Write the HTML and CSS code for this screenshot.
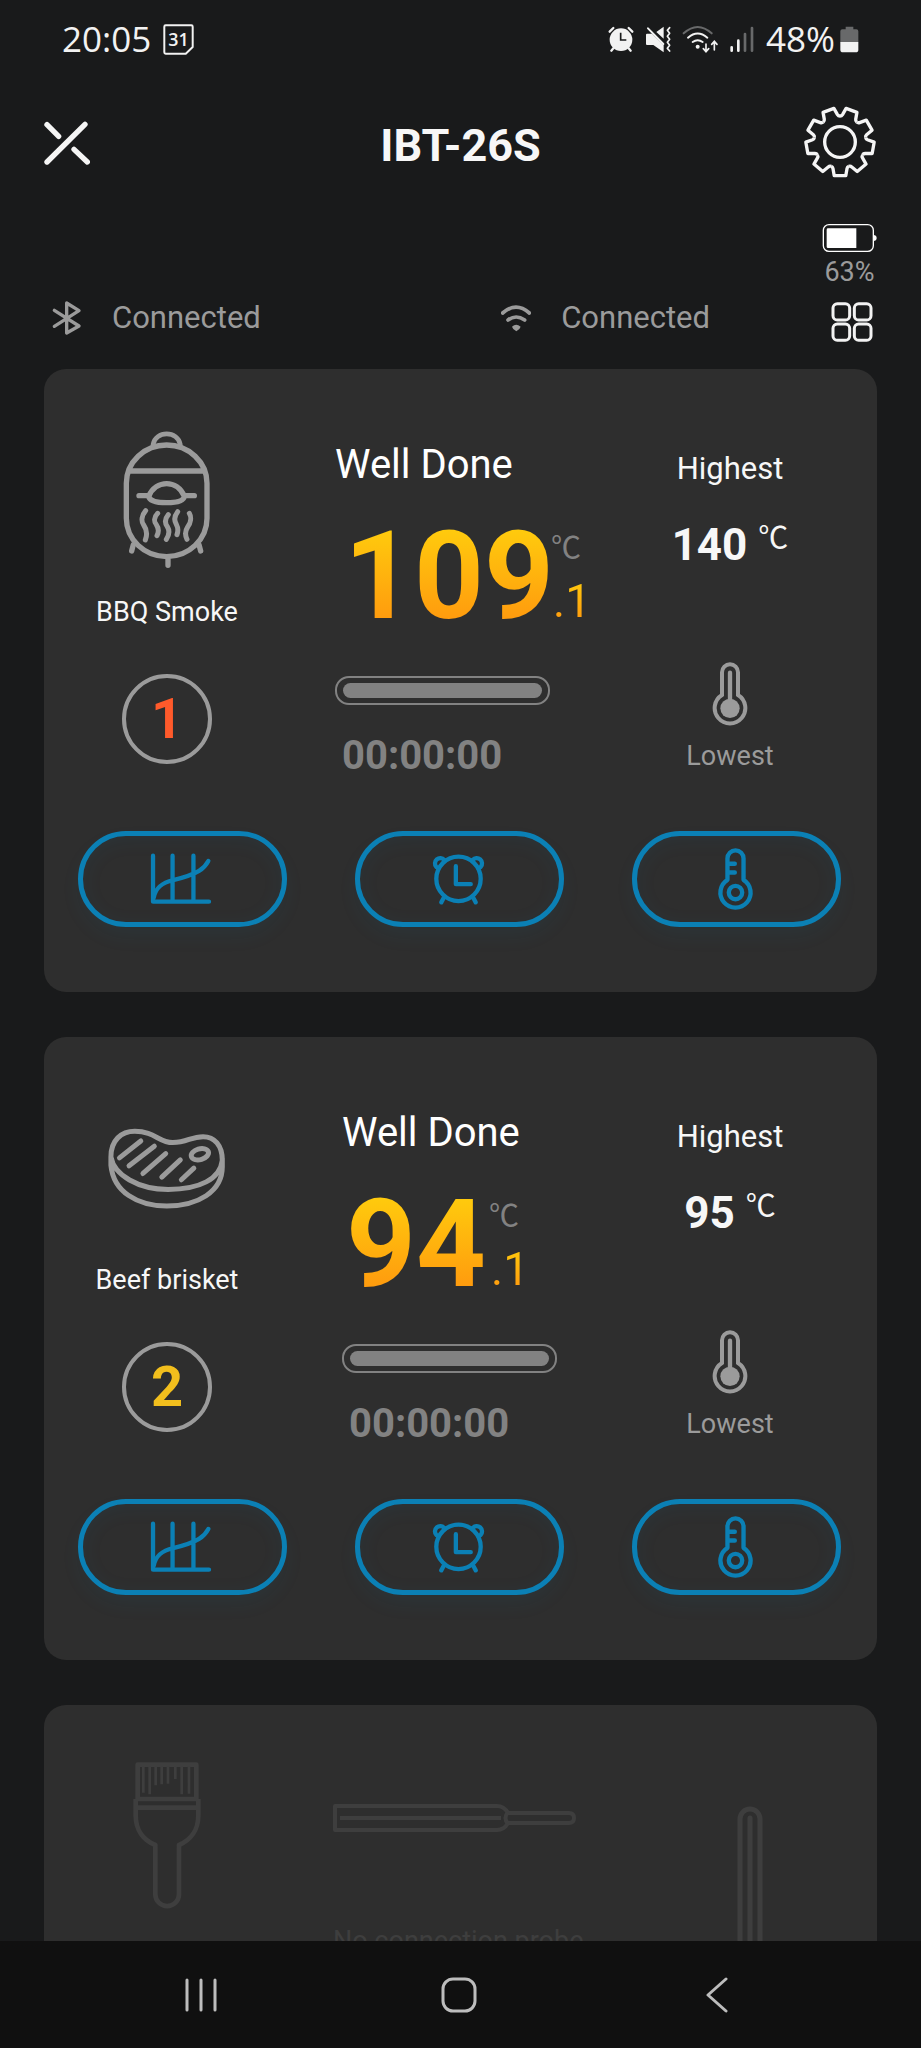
FILE: index.html
```html
<!DOCTYPE html>
<html lang="en">
<head>
<meta charset="utf-8">
<meta name="viewport" content="width=device-width, initial-scale=1">
<title>IBT-26S</title>
<link rel="stylesheet" href="styles.css">
</head>
<body>
<svg class="sprite" aria-hidden="true">
  <symbol id="i-chart" viewBox="328 157 200 160">
    <path d="M339 165V304H508M398 165V304M461 165V304M341 292C347 262 365 247 400 239C440 229 460 222 478 211Q496 200 506 181"/>
  </symbol>
  <symbol id="i-alarm" viewBox="1158 157 200 160">
    <circle cx="1255" cy="235" r="67"/>
    <path d="M1247 197V251H1292M1210 293L1203 306M1300 293L1307 306M1188 199A14 14 0 1 1 1212 178M1322 199A14 14 0 1 0 1298 178"/>
  </symbol>
  <symbol id="i-probe" viewBox="731 137 200 200">
    <path d="M804 238V174A24 24 0 0 1 852 174V238A45 45 0 1 1 804 238ZM806 190H826M806 216H826"/>
    <circle cx="828" cy="276" r="20"/>
  </symbol>
  <symbol id="i-lowest" viewBox="277 724 108 192">
    <path fill="none" stroke="currentColor" stroke-width="12" d="M307 823V755A24 24 0 0 1 355 755V823A46 46 0 1 1 307 823Z"/>
    <circle cx="331" cy="863" r="29" fill="currentColor"/>
    <path stroke="currentColor" stroke-width="13" stroke-linecap="round" d="M331 756V840"/>
  </symbol>
</svg>

<div class="app">
  <div class="status">
    <div class="status-left">
      <span>20:05</span>
      <svg width="33" height="33" viewBox="488 70 100 98" aria-hidden="true">
        <path fill="none" stroke="#f2f2f2" stroke-width="6" stroke-linejoin="round" d="M499 76H577Q581 76 581 80V142L560 162H499Q495 162 495 158V80Q495 76 499 76Z"/>
        <text class="cal-day" x="538" y="138" text-anchor="middle">31</text>
      </svg>
    </div>
    <div class="status-right">
      <svg width="26" height="28" viewBox="443 76 78 84" aria-hidden="true">
        <circle cx="482" cy="120" r="34" fill="#f2f2f2"/>
        <path fill="none" stroke="#f2f2f2" stroke-width="7" stroke-linecap="round" d="M448 96L459 85M516 96L505 85M459 146L453 153M505 146L511 153"/>
        <path fill="none" stroke="#191a1b" stroke-width="5" d="M481 99V121H498"/>
      </svg>
      <svg width="26" height="28" viewBox="557 76 78 84" aria-hidden="true">
        <path fill="#f2f2f2" d="M591 97L613 81V117ZM563 102H578L613 137V158L582 136H563Q560 136 560 133V105Q560 102 563 102Z"/>
        <path fill="none" stroke="#f2f2f2" stroke-width="6" stroke-linecap="round" d="M566 86L612 133"/>
        <path fill="none" stroke="#f2f2f2" stroke-width="5" stroke-linecap="round" stroke-linejoin="round" d="M631 84L624 92L631 101L624 110L631 119L624 128L631 137L624 146L631 154"/>
      </svg>
      <svg width="36" height="28" viewBox="668 76 108 84" aria-hidden="true">
        <g fill="none" stroke-width="6" stroke-linecap="round">
          <path stroke="#68696a" d="M673 101Q715 63 757 101"/>
          <path stroke="#f2f2f2" d="M686 114Q715 89 744 114M700 127Q715 116 730 127"/>
          <path stroke="#f2f2f2" stroke-width="5" d="M740 133V155M732 147L740 156L748 147M765 151V127M757 134L765 125L773 134"/>
        </g>
        <circle cx="715" cy="141" r="6" fill="#f2f2f2"/>
      </svg>
      <svg width="26" height="28" viewBox="797 76 78 84" aria-hidden="true">
        <g fill="none" stroke-width="8" stroke-linecap="round">
          <path stroke="#f2f2f2" d="M805 143V153M825 123V153"/>
          <path stroke="#68696a" d="M845 103V153M866 85V153"/>
        </g>
      </svg>
      <span>48%</span>
      <svg class="status-battery" width="19" height="28" viewBox="1139 76 57 84" aria-hidden="true">
        <path fill="#68696a" d="M1156 81H1179V89H1188Q1194 89 1194 95V128H1140V95Q1140 89 1146 89H1156Z"/>
        <path fill="#f2f2f2" d="M1140 127H1194V150Q1194 158 1186 158H1148Q1140 158 1140 150Z"/>
      </svg>
    </div>
  </div>

  <header class="topbar">
    <button class="icon-btn" type="button" aria-label="Close">
      <svg width="46" height="46" viewBox="132 358 138 138"><path fill="none" stroke="#f5f5f5" stroke-width="16" stroke-linecap="round" d="M255 374L141 487M141 375L176 410M222 449L262 487"/></svg>
    </button>
    <h1 class="title">IBT-26S</h1>
    <button class="icon-btn icon-btn-end" type="button" aria-label="Settings">
      <svg width="74" height="74" viewBox="-111 -111 222 222">
        <g fill="none" stroke="#f5f5f5" stroke-width="10" stroke-linejoin="round">
          <path id="tooth" d="M-26.7 73.3Q-22 75 -21 80L-17.3 101H17.3L21 80Q22 75 26.7 73.3"/>
          <use href="#tooth" transform="rotate(40)"/><use href="#tooth" transform="rotate(80)"/><use href="#tooth" transform="rotate(120)"/><use href="#tooth" transform="rotate(160)"/>
          <use href="#tooth" transform="rotate(200)"/><use href="#tooth" transform="rotate(240)"/><use href="#tooth" transform="rotate(280)"/><use href="#tooth" transform="rotate(320)"/>
          <circle r="46"/>
        </g>
      </svg>
    </button>
  </header>

  <section class="links" aria-label="Connections">
    <div class="link">
      <svg width="30" height="36" viewBox="157 292 90 108" aria-hidden="true"><path fill="none" stroke="#9b9b9b" stroke-width="10" stroke-linecap="round" stroke-linejoin="round" d="M164 323L238 370L201 391V301L238 324L164 371"/></svg>
      <span>Connected</span>
    </div>
    <div class="link">
      <svg width="30" height="36" viewBox="127 292 90 108" aria-hidden="true">
        <path fill="none" stroke="#9b9b9b" stroke-width="11" stroke-linecap="round" d="M132 331Q172 296 212 331M148 352Q172 334 198 352"/>
        <path fill="#9b9b9b" d="M160 372Q172 360 186 372Q184 380 173 386Q162 380 160 372Z"/>
      </svg>
      <span>Connected</span>
    </div>
    <div class="device">
      <svg width="55" height="28" viewBox="1084 72 165 84" aria-hidden="true">
        <rect x="1088" y="74" width="150" height="80" rx="17" fill="none" stroke="#fff" stroke-width="4"/>
        <path fill="#fff" d="M1102 85H1187V144H1102Q1098 144 1098 140V89Q1098 85 1102 85ZM1238 105Q1248 105 1248 114Q1248 123 1238 123Z"/>
      </svg>
      <span class="device-level">63%</span>
      <button class="grid-btn" type="button" aria-label="Grid view">
        <svg width="42" height="42" viewBox="1112 306 126 126"><g fill="none" stroke="#f2f2f2" stroke-width="9"><rect x="1118" y="314" width="50" height="49" rx="13"/><rect x="1182" y="314" width="50" height="49" rx="13"/><rect x="1118" y="375" width="50" height="49" rx="13"/><rect x="1182" y="375" width="50" height="49" rx="13"/></g></svg>
      </button>
    </div>
  </section>

  <main class="cards">
    <article class="card">
      <div class="info">
        <div class="food">
          <div class="food-icon">
            <svg width="90" height="140" viewBox="250 90 270 420" aria-hidden="true">
              <g fill="none" stroke="#9b9b9b" stroke-width="16" stroke-linecap="round">
                <path d="M263 250A121 115 0 0 1 505 250V355A121 115 0 0 1 263 355ZM270 213H498"/>
                <path d="M343 134C350 91 418 91 425 134" stroke-width="14"/>
                <path d="M330 289C352 238 416 238 437 289Q434 308 384 308Q334 308 330 289ZM301 287H326M441 287H467M284 434L279 453M481 434L486 453M388 478V496"/>
                <path stroke-width="15" d="M321 332C310 345 306 362 315 375C325 389 327 402 320 420M357 340C345 352 346 366 353 374C361 385 361 395 355 407M389 344C378 357 378 369 386 380C394 393 391 406 383 418M417 335C407 348 405 360 413 373C419 384 419 393 415 404M452 340C459 352 456 369 447 381C439 393 438 404 445 418"/>
              </g>
            </svg>
          </div>
          <h2 class="food-name">BBQ Smoke</h2>
          <span class="ring ring-red">1</span>
        </div>
        <div class="main-reading">
          <p class="doneness">Well Done</p>
          <p class="temp"><span class="temp-int">109</span><span class="temp-side"><span class="unit">℃</span><span class="temp-dec">.1</span></span></p>
          <div class="bar" role="progressbar" aria-label="Cooking progress"><div class="bar-fill"></div></div>
          <time class="timer">00:00:00</time>
        </div>
        <div class="limits">
          <p class="limit-name">Highest</p>
          <p class="limit-value">140<span class="unit">℃</span></p>
          <svg class="lowest-icon" width="36" height="64" aria-hidden="true"><use href="#i-lowest"/></svg>
          <p class="limit-low">Lowest</p>
        </div>
      </div>
      <div class="actions">
        <button class="action" type="button" aria-label="Chart"><svg width="67" height="53"><use href="#i-chart"/></svg></button>
        <button class="action" type="button" aria-label="Timer"><svg width="67" height="53"><use href="#i-alarm"/></svg></button>
        <button class="action" type="button" aria-label="Temperature"><svg width="67" height="67"><use href="#i-probe"/></svg></button>
      </div>
    </article>

    <article class="card card-short">
      <div class="info">
        <div class="food">
          <div class="food-icon">
            <svg width="121" height="83" viewBox="190 105 340 250" preserveAspectRatio="none" aria-hidden="true">
              <g class="steady" fill="none" stroke="#9b9b9b" stroke-width="5" stroke-linecap="round">
                <path d="M201 195C201 145 230 118 268 118C325 118 335 152 375 152C415 152 425 134 460 134C492 134 514 160 514 205C508 262 450 293 362 293C278 293 210 250 201 195ZM201 195V220C208 300 275 343 358 343C445 343 514 300 514 225V200"/>
                <path d="M285 147L225 198M323 163L252 222M355 185L291 245M396 204L344 256M434 229L399 264"/>
                <ellipse cx="451" cy="187" rx="25" ry="16" transform="rotate(-18 451 187)"/>
              </g>
            </svg>
          </div>
          <h2 class="food-name">Beef brisket</h2>
          <span class="ring ring-yellow">2</span>
        </div>
        <div class="main-reading">
          <p class="doneness">Well Done</p>
          <p class="temp"><span class="temp-int">94</span><span class="temp-side"><span class="unit">℃</span><span class="temp-dec">.1</span></span></p>
          <div class="bar" role="progressbar" aria-label="Cooking progress"><div class="bar-fill"></div></div>
          <time class="timer">00:00:00</time>
        </div>
        <div class="limits">
          <p class="limit-name">Highest</p>
          <p class="limit-value">95<span class="unit">℃</span></p>
          <svg class="lowest-icon" width="36" height="64" aria-hidden="true"><use href="#i-lowest"/></svg>
          <p class="limit-low">Lowest</p>
        </div>
      </div>
      <div class="actions">
        <button class="action" type="button" aria-label="Chart"><svg width="67" height="53"><use href="#i-chart"/></svg></button>
        <button class="action" type="button" aria-label="Timer"><svg width="67" height="53"><use href="#i-alarm"/></svg></button>
        <button class="action" type="button" aria-label="Temperature"><svg width="67" height="67"><use href="#i-probe"/></svg></button>
      </div>
    </article>

    <article class="card card-idle">
      <div class="info">
        <div class="idle-brush">
          <svg width="70" height="149" viewBox="155 32 210 447" aria-hidden="true">
            <g fill="none" stroke="#3e3e3e" stroke-width="14" stroke-linejoin="round">
              <path d="M172 146V43H348V146M166 146H354M166 172H354M166 146V195C166 240 190 270 225 284V432A35 35 0 0 0 296 432V284C330 270 354 240 354 195V146"/>
              <path stroke-width="8" d="M189 48V127M208 48V132M226 48V105M244 48V102M263 48V100M285 48V86M304 48V132M326 48V130"/>
            </g>
          </svg>
        </div>
        <div class="idle-probe">
          <svg width="244" height="30" viewBox="0 0 244 30" aria-hidden="true">
            <g fill="none" stroke="#3e3e3e" stroke-width="4" stroke-linejoin="round">
              <path d="M2 3H164Q171 3 175 10H236Q241 10 241 15Q241 20 236 20H175Q171 27 164 27H2Z"/>
              <path d="M7 15H168M175 9Q170 15 175 21"/>
            </g>
          </svg>
          <p class="idle-text">No connection probe</p>
        </div>
        <div class="idle-sensor">
          <svg width="26" height="220" viewBox="0 0 26 220" aria-hidden="true"><g fill="none" stroke="#3e3e3e" stroke-width="5"><path d="M3 217V13A10 10 0 0 1 23 13V217Z"/><path d="M13 12V208" stroke-linecap="round"/></g></svg>
        </div>
      </div>
    </article>
  </main>

  <nav class="navbar" aria-label="System">
    <button class="nav-btn" type="button" aria-label="Recents"><svg width="36" height="36" viewBox="0 0 36 36"><path fill="none" stroke="#bdbdbd" stroke-width="3" stroke-linecap="round" d="M4 3V33M18 3V33M32 3V33"/></svg></button>
    <button class="nav-btn" type="button" aria-label="Home"><svg width="36" height="36" viewBox="0 0 36 36"><rect x="2" y="2" width="32" height="32" rx="10" fill="none" stroke="#bdbdbd" stroke-width="3"/></svg></button>
    <button class="nav-btn" type="button" aria-label="Back"><svg width="36" height="36" viewBox="0 0 36 36"><path fill="none" stroke="#bdbdbd" stroke-width="3" stroke-linecap="round" stroke-linejoin="round" d="M27 2L9 18L27 34"/></svg></button>
  </nav>
</div>
</body>
</html>
```
FILE: styles.css
```css
* { box-sizing: border-box; }

body {
  margin: 0;
  background: #191a1b;
  color: #f7f7f7;
  font-family: Roboto, "Noto Sans CJK SC", sans-serif;
}

h1, h2, p { margin: 0; }
svg { display: block; flex: none; }
button { padding: 0; border: 0; background: none; color: inherit; font: inherit; }
.sprite { position: absolute; width: 0; height: 0; }

.app {
  display: flex;
  flex-direction: column;
  height: 100vh;
}

/* System status bar */
.status {
  display: flex;
  justify-content: space-between;
  align-items: center;
  height: 78px;
  padding: 0 62px;
  color: #f2f2f2;
  font-family: "Open Sans", sans-serif;
  font-size: 35px;
  line-height: 46px;
}
.status-left, .status-right { display: flex; align-items: center; gap: 11px; }
.status-battery { margin-left: -6px; }
.cal-day { font: 600 54px "Open Sans", sans-serif; fill: #f2f2f2; }

/* App header */
.topbar {
  display: grid;
  grid-template-columns: 1fr auto 1fr;
  align-items: center;
  height: 128px;
  padding: 0 44px;
}
.title { padding-top: 8px; font-size: 45px; line-height: 52px; font-weight: 700; }
.icon-btn { justify-self: start; }
.icon-btn-end { justify-self: end; }

/* Connection row */
.links {
  display: grid;
  grid-template-columns: 7fr 5fr auto;
  align-items: end;
  padding: 18px 44px 26px 52px;
  color: #9b9b9b;
}
.link {
  display: flex;
  align-items: center;
  gap: 30px;
  margin-bottom: 6px;
  font-size: 31px;
  line-height: 38px;
}
.device { display: flex; flex-direction: column; align-items: center; }
.device-level { margin: 4px 0 13px; font-size: 27px; line-height: 32px; }
.grid-btn { align-self: flex-end; padding-right: 4px; }

/* Probe cards */
.cards {
  display: flex;
  flex: 1;
  flex-direction: column;
  gap: 45px;
  min-height: 0;
  padding: 0 44px;
  overflow: hidden;
}
.card {
  flex: none;
  padding: 61px 36px 65px 34px;
  border-radius: 22px;
  background: #2e2e2e;
}
.info { display: grid; grid-template-columns: 178px 1fr 222px; }

.food { display: flex; flex-direction: column; align-items: center; }
.food-icon { display: flex; align-items: center; height: 140px; }
.food-name { margin: 26px 0 46px; font-size: 27px; line-height: 32px; font-weight: 400; }
.steady * { vector-effect: non-scaling-stroke; }
.ring {
  display: flex;
  align-items: center;
  justify-content: center;
  width: 90px;
  height: 90px;
  border: 4px solid #9b9b9b;
  border-radius: 50%;
  font-size: 56px;
  line-height: 64px;
  font-weight: 700;
}
.ring-red { color: #ff5a2b; }
.ring-yellow { color: #f2bf1d; }

.main-reading { padding: 11px 0 0 79px; }
.card-short .main-reading { padding-left: 86px; }
.doneness { font-size: 40px; line-height: 48px; color: #fff; }
.temp { display: flex; margin: 28px 0 39px 9px; }
.card-short .temp { margin-left: 4px; }
.temp-int {
  font-size: 122px;
  line-height: 120px;
  font-weight: 700;
  background: linear-gradient(#ffcb0d 10%, #ff980e 90%);
  background-clip: text;
  color: transparent;
}
.temp-side { display: flex; flex-direction: column; margin-left: -3px; }
.card-short .temp-side { margin-left: 3px; }
.temp-side .unit { margin-top: 12px; color: #828282; }
.temp-dec {
  margin-top: 7px;
  padding-left: 2px;
  font-size: 46px;
  line-height: 54px;
  background: linear-gradient(#ffcb0d 10%, #ff980e 90%);
  background-clip: text;
  color: transparent;
}
.unit { font-size: 30px; line-height: 38px; font-weight: 400; }

.bar {
  width: 215px;
  height: 29px;
  padding: 5px 6px;
  border: 2px solid #828282;
  border-radius: 14px;
}
.bar-fill { height: 15px; border-radius: 8px; background: #828282; }
.timer {
  display: block;
  margin: 27px 0 0 7px;
  color: #828282;
  font-size: 40px;
  line-height: 48px;
  font-weight: 700;
}

.limits { display: flex; flex-direction: column; align-items: center; padding-top: 20px; }
.limit-name { font-size: 31px; line-height: 38px; }
.limit-value {
  display: flex;
  gap: 11px;
  margin: 31px 0 91px;
  font-size: 44px;
  line-height: 52px;
  font-weight: 700;
}
.lowest-icon { color: #9b9b9b; }
.limit-low { margin-top: 14px; color: #9b9b9b; font-size: 27px; line-height: 32px; }

.actions {
  display: grid;
  grid-template-columns: repeat(3, 1fr);
  gap: 68px;
  margin-top: 51px;
}
.action {
  display: flex;
  align-items: center;
  justify-content: center;
  height: 96px;
  border: 5px solid #0b80b5;
  border-radius: 48px;
  box-shadow: 0 10px 20px rgba(11, 128, 181, 0.06), inset 0 4px 20px rgba(11, 128, 181, 0.07);
}
.action svg {
  fill: none;
  stroke: #0b80b5;
  stroke-width: 13px;
  stroke-linecap: round;
  stroke-linejoin: round;
}

/* Card without a connected probe */
.card-idle { padding-top: 56px; }
.idle-brush { display: flex; justify-content: center; }
.idle-probe { padding: 42px 0 0 77px; }
.idle-text { margin-top: 92px; color: #3e3e3e; font-size: 27px; line-height: 32px; }
.idle-sensor { padding: 45px 0 0 118px; }

/* System navigation */
.navbar {
  display: grid;
  grid-template-columns: repeat(3, 1fr);
  flex: none;
  height: 107px;
  padding: 0 75px 0 72px;
  background: #101010;
}
.nav-btn { display: flex; align-items: center; justify-content: center; }
```
